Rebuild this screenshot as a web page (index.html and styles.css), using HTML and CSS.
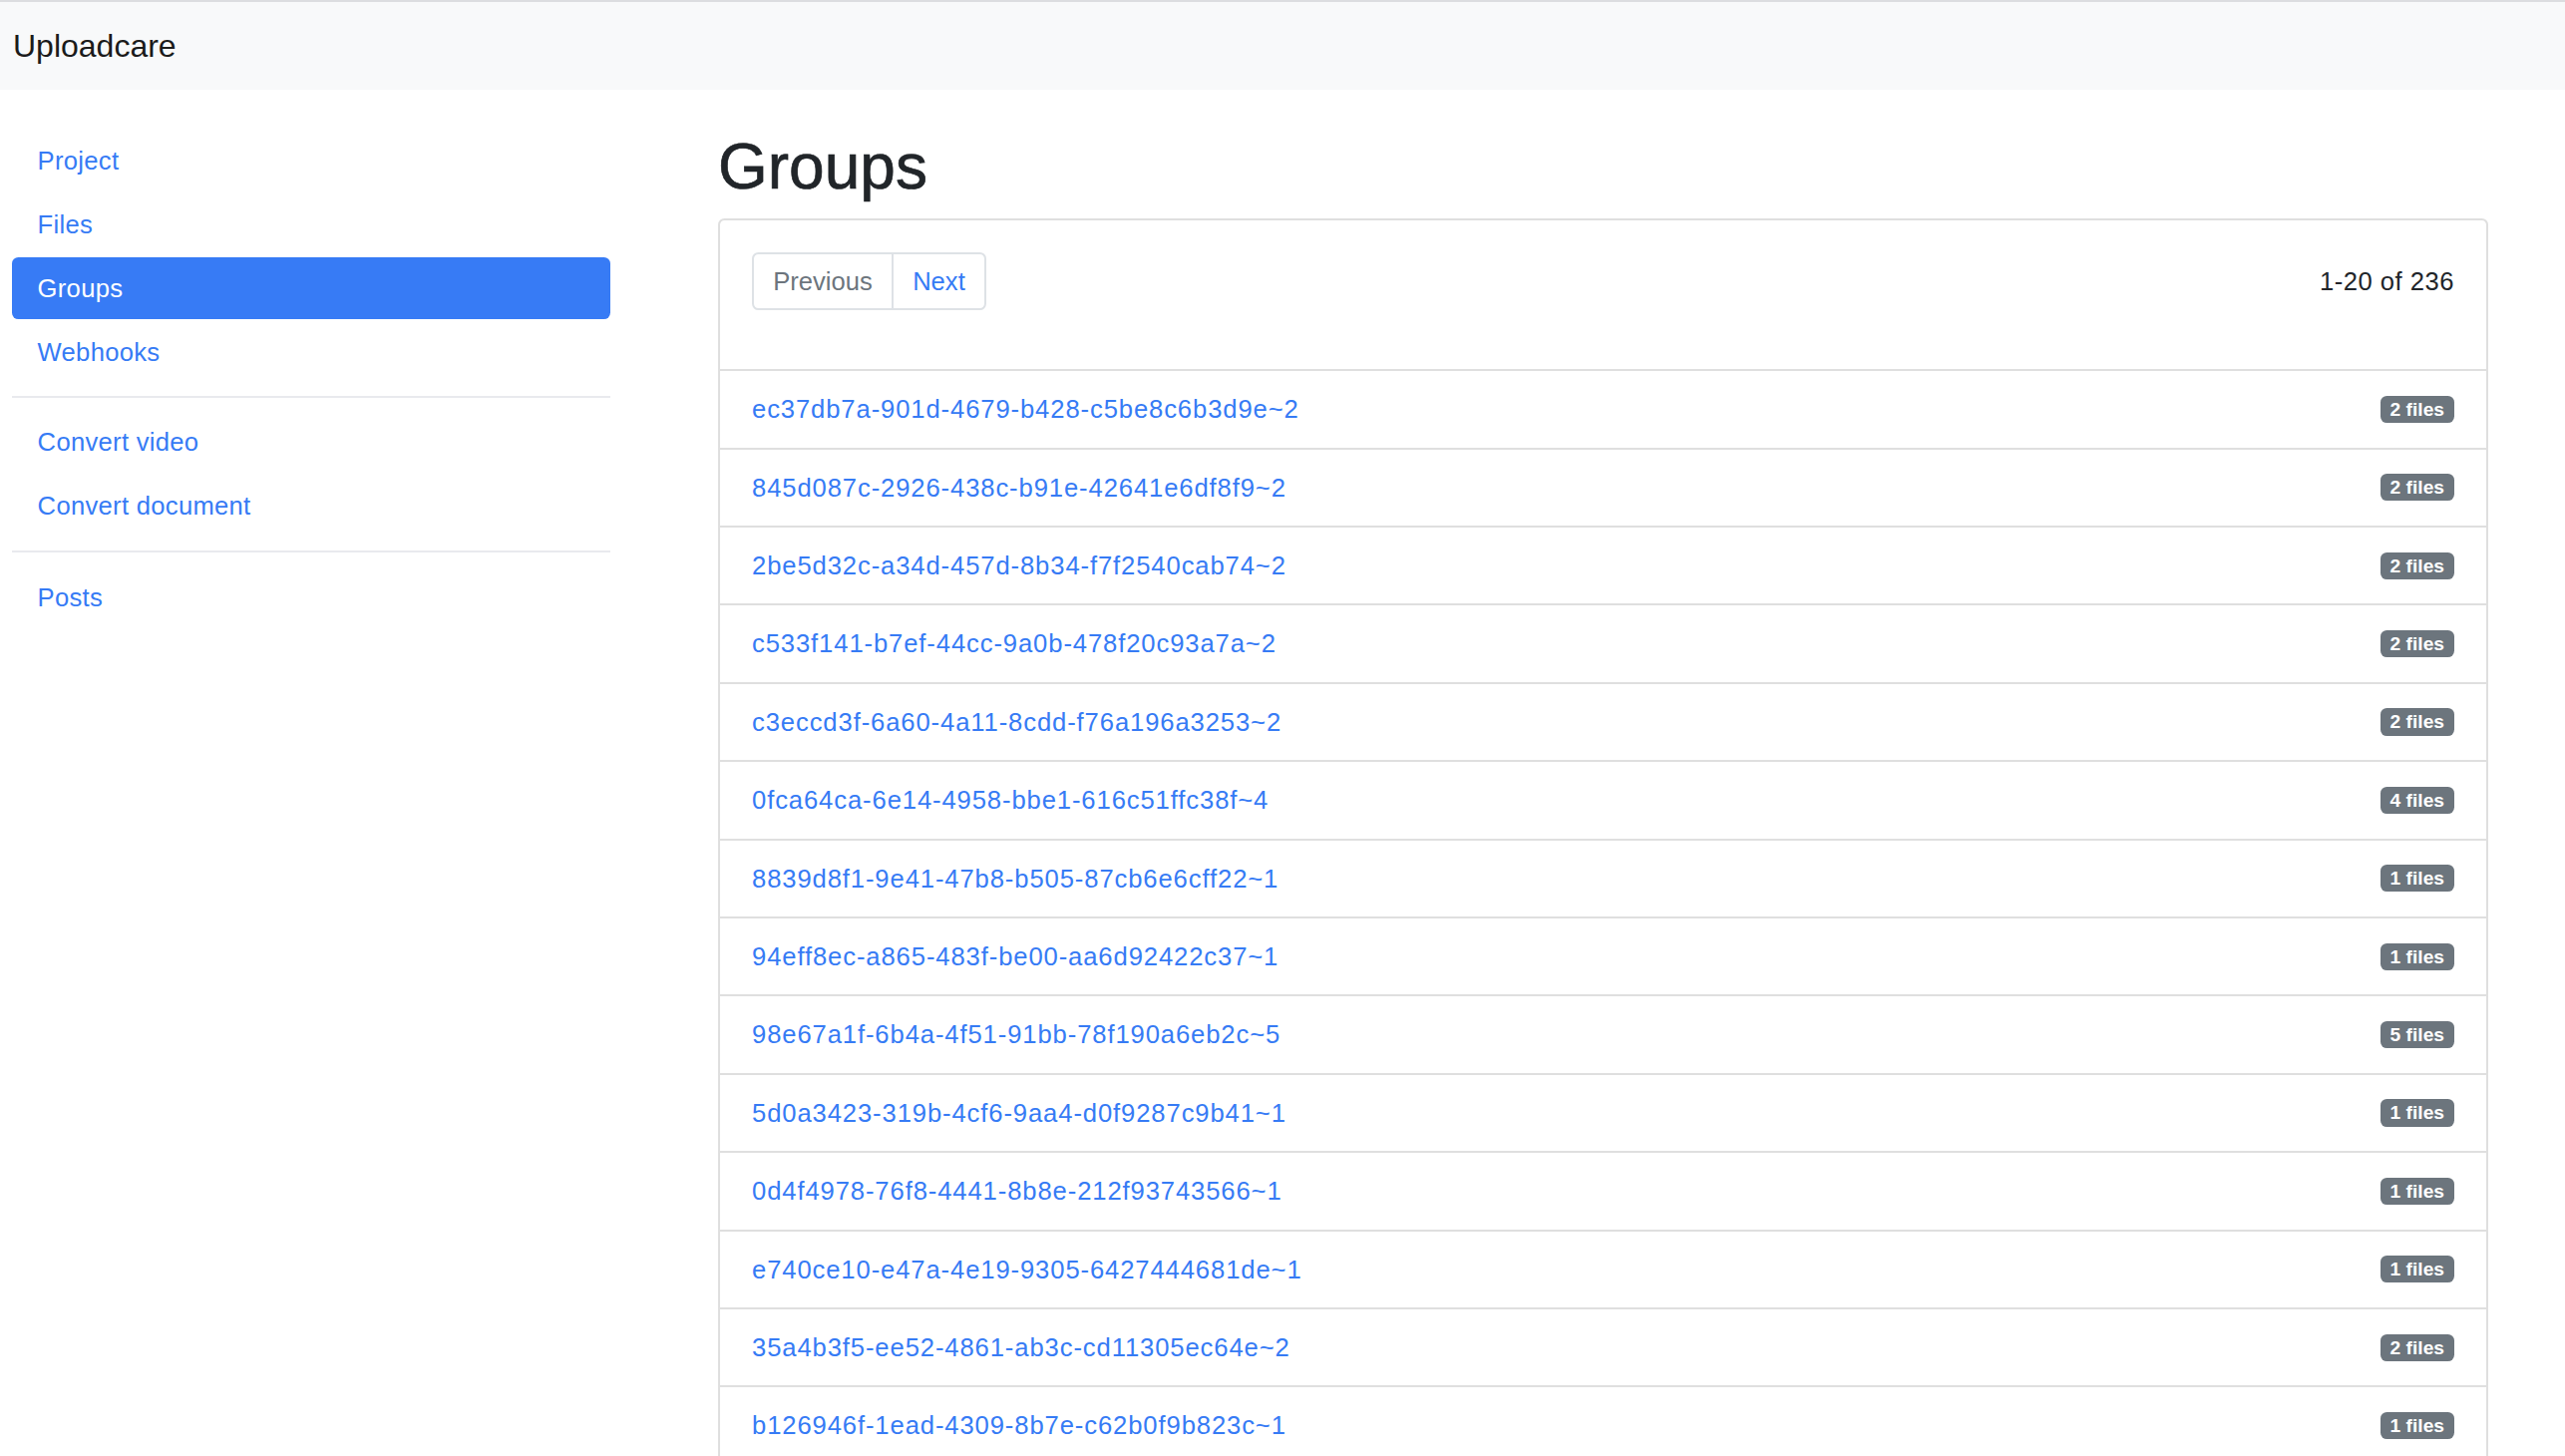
FILE: index.html
```html
<!DOCTYPE html>
<html lang="en">
<head>
<meta charset="utf-8">
<title>Groups · Uploadcare</title>
<link rel="stylesheet" href="styles.css">
</head>
<body>
<header class="navbar">
  <a class="brand" href="#">Uploadcare</a>
</header>
<div class="layout">
  <aside class="sidebar">
    <ul class="nav">
      <li><a class="nav-link" href="#">Project</a></li>
      <li><a class="nav-link" href="#">Files</a></li>
      <li><a class="nav-link active" href="#">Groups</a></li>
      <li><a class="nav-link" href="#">Webhooks</a></li>
    </ul>
    <hr class="divider divider-first">
    <ul class="nav">
      <li><a class="nav-link" href="#">Convert video</a></li>
      <li><a class="nav-link" href="#">Convert document</a></li>
    </ul>
    <hr class="divider">
    <ul class="nav">
      <li><a class="nav-link" href="#">Posts</a></li>
    </ul>
  </aside>
  <main class="main">
    <h1 class="title">Groups</h1>
    <section class="card">
      <div class="card-head">
        <ul class="pagination">
          <li><span class="page-link disabled">Previous</span></li>
          <li><a class="page-link next" href="#">Next</a></li>
        </ul>
        <div class="count">1-20 of 236</div>
      </div>
      <ul class="list">
        <li class="row"><a class="hash" href="#">ec37db7a-901d-4679-b428-c5be8c6b3d9e~2</a><span class="badge">2 files</span></li>
        <li class="row"><a class="hash" href="#">845d087c-2926-438c-b91e-42641e6df8f9~2</a><span class="badge">2 files</span></li>
        <li class="row"><a class="hash" href="#">2be5d32c-a34d-457d-8b34-f7f2540cab74~2</a><span class="badge">2 files</span></li>
        <li class="row"><a class="hash" href="#">c533f141-b7ef-44cc-9a0b-478f20c93a7a~2</a><span class="badge">2 files</span></li>
        <li class="row"><a class="hash" href="#">c3eccd3f-6a60-4a11-8cdd-f76a196a3253~2</a><span class="badge">2 files</span></li>
        <li class="row"><a class="hash" href="#">0fca64ca-6e14-4958-bbe1-616c51ffc38f~4</a><span class="badge">4 files</span></li>
        <li class="row"><a class="hash" href="#">8839d8f1-9e41-47b8-b505-87cb6e6cff22~1</a><span class="badge">1 files</span></li>
        <li class="row"><a class="hash" href="#">94eff8ec-a865-483f-be00-aa6d92422c37~1</a><span class="badge">1 files</span></li>
        <li class="row"><a class="hash" href="#">98e67a1f-6b4a-4f51-91bb-78f190a6eb2c~5</a><span class="badge">5 files</span></li>
        <li class="row"><a class="hash" href="#">5d0a3423-319b-4cf6-9aa4-d0f9287c9b41~1</a><span class="badge">1 files</span></li>
        <li class="row"><a class="hash" href="#">0d4f4978-76f8-4441-8b8e-212f93743566~1</a><span class="badge">1 files</span></li>
        <li class="row"><a class="hash" href="#">e740ce10-e47a-4e19-9305-6427444681de~1</a><span class="badge">1 files</span></li>
        <li class="row"><a class="hash" href="#">35a4b3f5-ee52-4861-ab3c-cd11305ec64e~2</a><span class="badge">2 files</span></li>
        <li class="row"><a class="hash" href="#">b126946f-1ead-4309-8b7e-c62b0f9b823c~1</a><span class="badge">1 files</span></li>
      </ul>
    </section>
  </main>
</div>
</body>
</html>
```

FILE: styles.css
```css
* {
  box-sizing: border-box;
}

html, body {
  margin: 0;
  padding: 0;
  background: #ffffff;
}

body {
  font-family: "Liberation Sans", Arial, sans-serif;
  font-size: 25.6px;
  line-height: 1.5;
  color: #212529;
}

a {
  text-decoration: none;
}

ul {
  list-style: none;
  margin: 0;
  padding: 0;
}

/* Top bar */
.navbar {
  border-top: 2px solid #dcdde0;
  background: #f8f9fa;
  height: 90px;
  padding: 0 13px;
  display: flex;
  align-items: center;
}

.brand {
  font-size: 32px;
  line-height: 48px;
  color: #1b1b1b;
}

/* Page layout */
.layout {
  display: grid;
  grid-template-columns: 643px 1fr;
}

.sidebar {
  padding: 40px 31px 0 12px;
}

.nav {
  display: flex;
  flex-direction: column;
  gap: 2px;
}

.nav-link {
  display: block;
  padding: 12px 25.6px;
  line-height: 38px;
  color: #367bf5;
  border-radius: 6.4px;
  letter-spacing: 0.3px;
}

.nav-link.active {
  background: #377bf5;
  color: #ffffff;
}

.divider {
  border: 0;
  border-top: 2px solid #e9eaee;
  margin: 14px 0;
  height: 0;
}

.divider-first {
  margin: 13px 0;
}

.main {
  padding: 39px 77px 0 77px;
  min-width: 0;
}

.title {
  font-size: 64px;
  font-weight: 500;
  line-height: 76.8px;
  margin: 0 0 12.8px 0;
  color: #212529;
  -webkit-text-stroke: 0.7px #212529;
}

/* Card */
.card {
  border: 2px solid #dfdfdf;
  border-radius: 6.4px;
}

.card-head {
  display: flex;
  justify-content: space-between;
  align-items: flex-start;
  padding: 32px 32px 59.6px 32px;
}

.pagination {
  display: flex;
}

.page-link {
  display: block;
  padding: 11px 19.2px;
  line-height: 32px;
  border: 2px solid #dee2e6;
  background: #ffffff;
}

.page-link.disabled {
  color: #6c757d;
  border-radius: 6.4px 0 0 6.4px;
}

.page-link.next {
  color: #367bf5;
  margin-left: -2px;
  border-radius: 0 6.4px 6.4px 0;
}

.count {
  line-height: 58px;
  letter-spacing: 0.5px;
  color: #212529;
}

.list .row {
  display: flex;
  justify-content: space-between;
  align-items: center;
  padding: 19px 32px;
  border-top: 2px solid #dfdfdf;
  line-height: 38.4px;
}

.hash {
  color: #367bf5;
  letter-spacing: 0.9px;
}

.badge {
  display: inline-block;
  background: #6c757d;
  color: #ffffff;
  font-size: 19.2px;
  font-weight: 700;
  line-height: 1;
  padding: 4px 10px;
  border-radius: 6.4px;
}
```
